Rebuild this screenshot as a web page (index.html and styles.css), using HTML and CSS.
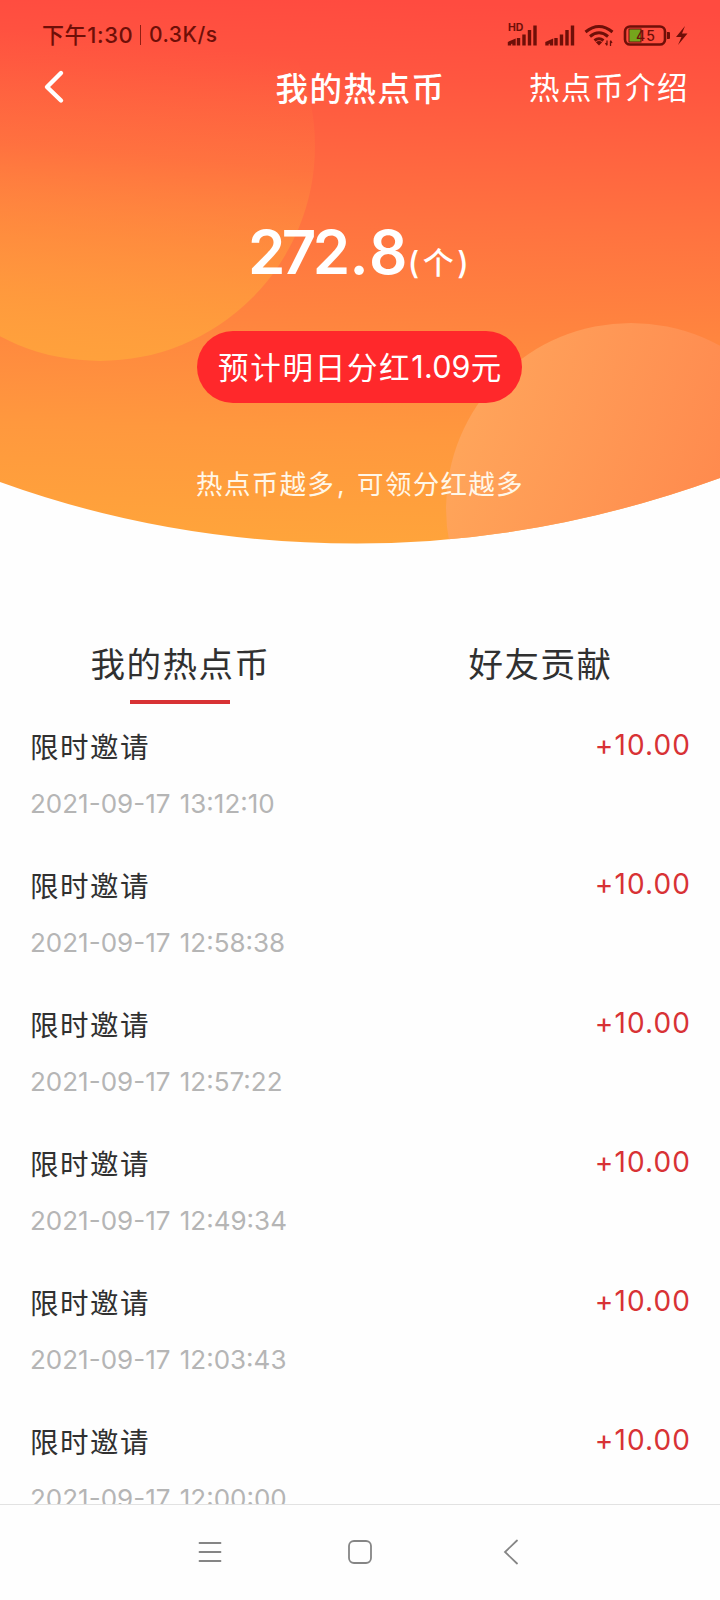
FILE: index.html
```html
<!DOCTYPE html>
<html lang="zh-CN">
<head>
<meta charset="utf-8">
<title>我的热点币</title>
<link rel="stylesheet" href="styles.css">
</head>
<body>
<main class="phone">
  <section class="hero">
    <svg class="hero-bg" width="720" height="546" viewBox="0 0 720 546" aria-hidden="true">
      <defs>
        <linearGradient id="base" gradientUnits="userSpaceOnUse" x1="370" y1="0" x2="350" y2="543">
          <stop offset="0" stop-color="#ff4b40"/><stop offset="0.14" stop-color="#ff5640"/><stop offset="0.4" stop-color="#ff7240"/><stop offset="0.6" stop-color="#ff853f"/><stop offset="0.8" stop-color="#ff983e"/><stop offset="1" stop-color="#ffa43b"/>
        </linearGradient>
        <linearGradient id="left" gradientUnits="userSpaceOnUse" x1="125" y1="40" x2="95" y2="361">
          <stop offset="0" stop-color="#ffa13c" stop-opacity="0"/><stop offset="0.35" stop-color="#ffa13c" stop-opacity="0.18"/><stop offset="0.7" stop-color="#ffa13c" stop-opacity="0.6"/><stop offset="1" stop-color="#ffa13c"/>
        </linearGradient>
        <linearGradient id="right" x1="0.1" y1="0.2" x2="0.75" y2="0.5">
          <stop offset="0" stop-color="#ffa65f"/><stop offset="1" stop-color="#ff8650"/>
        </linearGradient>
        <clipPath id="arc"><path d="M0 0H720V478Q540 543.5 357 543.5Q170 543.5 0 482Z"/></clipPath>
      </defs>
      <g clip-path="url(#arc)">
        <rect width="720" height="546" fill="url(#base)"/>
        <circle cx="100" cy="146" r="215" fill="url(#left)"/>
        <circle cx="631" cy="508" r="185" fill="url(#right)" opacity="0.85"/>
      </g>
    </svg>
    <div class="status">
      <span class="clock">下午1:30</span><span class="bar"></span><span class="speed">0.3K/s</span>
      <svg class="status-icons" width="184" height="30" viewBox="0 0 184 30">
        <text class="hd" x="0" y="11">HD</text>
        <g class="signal"><path d="M1.500 25.500V23L6 21V25.500M10.500 25.500V18M16 25.500V14.500M21.500 25.500V10M27 25.500V5.500"/><path d="M39 25.500V23L43.500 21V25.500M48 25.500V18M53.500 25.500V14.500M59 25.500V10M64.500 25.500V5.500"/></g>
        <g class="wifi"><path d="M77.500 12Q91 1 104.500 12M82 16.500Q91 9 100 16.500M86.500 20.500Q91 17 95.500 20.500"/></g>
        <path class="solid" d="M87.800 22.200Q91 20 94.200 22.200L91 25.500Z"/>
        <path class="tiny" d="M99 20.500V25M102.500 21V26M97.500 23L99 25.500M104 23L102.500 20.500"/>
        <rect x="121" y="9" width="12" height="13" fill="#75a51c"/>
        <rect class="battery" x="117" y="6.500" width="40" height="18" rx="5"/>
        <path class="solid" d="M159 12h2q1 0 1 1v5q0 1-1 1h-2z"/>
        <text class="level" x="138" y="20.500" text-anchor="middle">45</text>
        <path class="solid" d="M177 6L168 17H173.500L170 25L179.500 13.500H174Z"/>
      </svg>
    </div>
    <header class="navbar">
      <svg class="back" width="24" height="36" viewBox="0 0 24 36"><path d="M19 4L5 18L19 31.500"/></svg>
      <h1 class="title">我的热点币</h1>
      <a class="intro">热点币介绍</a>
    </header>
    <p class="balance"><strong class="amount">272<span class="dot">.</span>8</strong><span class="unit">(个)</span></p>
    <div class="pill">预计明日分红<span class="pill-num">1.09</span>元</div>
    <p class="tip">热点币越多<span class="comma">,</span>可领分红越多</p>
  </section>
  <nav class="tabs">
    <div class="tab active"><span>我的热点币</span></div>
    <div class="tab"><span>好友贡献</span></div>
  </nav>
  <ul class="list">
    <li class="item"><div class="row"><span>限时邀请</span><b class="gain">+10.00</b></div><time class="date">2021-09-17 13:12:10</time></li>
    <li class="item"><div class="row"><span>限时邀请</span><b class="gain">+10.00</b></div><time class="date">2021-09-17 12:58:38</time></li>
    <li class="item"><div class="row"><span>限时邀请</span><b class="gain">+10.00</b></div><time class="date">2021-09-17 12:57:22</time></li>
    <li class="item"><div class="row"><span>限时邀请</span><b class="gain">+10.00</b></div><time class="date">2021-09-17 12:49:34</time></li>
    <li class="item"><div class="row"><span>限时邀请</span><b class="gain">+10.00</b></div><time class="date">2021-09-17 12:03:43</time></li>
    <li class="item"><div class="row"><span>限时邀请</span><b class="gain">+10.00</b></div><time class="date">2021-09-17 12:00:00</time></li>
  </ul>
  <footer class="keys">
    <svg class="key" width="26" height="26" viewBox="0 0 26 26"><path d="M2.500 4H23.500M2.500 13H23.500M2.500 22H23.500"/></svg>
    <svg class="key" width="26" height="26" viewBox="0 0 26 26"><rect x="2" y="2" width="22" height="22" rx="5"/></svg>
    <svg class="key" width="26" height="26" viewBox="0 0 26 26"><path d="M20 1.500L8 13L20 24.500"/></svg>
  </footer>
</main>
</body>
</html>
```

FILE: styles.css
```css
* { box-sizing: border-box; margin: 0; padding: 0; }
body { background: #fff; font-family: Inter, "Noto Sans CJK SC", sans-serif; color: #303030; }
.phone { width: 720px; height: 1600px; display: flex; flex-direction: column; overflow: hidden; background: #fefefe; }

.hero { position: relative; z-index: 0; height: 546px; flex: none; color: #fff; display: flex; flex-direction: column; align-items: center; }
.hero-bg { position: absolute; left: 0; top: 0; z-index: -1; }

.status { width: 100%; height: 68px; padding: 1px 28px 0 42px; display: flex; align-items: center; color: #6f0f08; font-size: 22px; font-weight: 500; white-space: nowrap; }
.clock { width: 92px; margin-bottom: 4px; letter-spacing: 0.6px; }
.bar { width: 1px; height: 20px; margin: 0 8px 0 6px; background: #8f1d12; }
.speed { font-size: 21px; letter-spacing: 0.5px; }
.status-icons { margin-left: auto; overflow: visible; fill: none; stroke: #6f0f08; }
.status-icons text, .solid { fill: #6f0f08; stroke: none; }
.hd { font-size: 10.5px; font-weight: 700; }
.level { font-size: 14px; font-weight: 500; letter-spacing: 1px; }
.signal { stroke-width: 3.4; }
.wifi { stroke-width: 3; }
.tiny { stroke-width: 1.3; }
.battery { stroke-width: 2.6; }

.navbar { width: 100%; height: 44px; padding: 0 31px 0 42px; display: grid; grid-template-columns: 160px 1fr 160px; align-items: center; }
.back { margin-bottom: 6px; fill: none; stroke: #fff; stroke-width: 4.4; stroke-linecap: round; stroke-linejoin: round; }
.title { margin-right: 10px; font-size: 32.5px; font-weight: 500; letter-spacing: 1.5px; line-height: 44px; text-align: center; white-space: nowrap; }
.intro { font-size: 30.5px; letter-spacing: 1.5px; line-height: 40px; height: 44px; white-space: nowrap; }

.balance { height: 76px; margin-top: 102px; display: flex; align-items: baseline; line-height: 76px; }
.amount { font-size: 60px; font-weight: 600; letter-spacing: -3.6px; }
.dot { margin: 0 4px 0 3px; }
.unit { margin-left: 4px; font-size: 31px; font-weight: 500; letter-spacing: 3.5px; }
.pill { width: 325px; height: 72px; margin: 41px 1px 0 0; padding: 0 0 2px 2px; border-radius: 36px; background: #ff282b; display: flex; align-items: center; justify-content: center; font-size: 30.5px; letter-spacing: 1.7px; white-space: nowrap; }
.pill-num { letter-spacing: 0.2px; }
.tip { margin-top: 61px; height: 38px; line-height: 40px; font-size: 26.5px; letter-spacing: 1.3px; color: #fff7e8; white-space: nowrap; }
.comma { display: inline-block; width: 22px; padding-left: 2px; }

.tabs { height: 158px; flex: none; display: grid; grid-template-columns: 1fr 1fr; padding-top: 89px; }
.tab { display: flex; flex-direction: column; align-items: center; padding-left: 1px; font-size: 34.5px; letter-spacing: 1.5px; line-height: 60px; }
.tab::after { content: ""; width: 100px; height: 4px; margin: 5px 1px 0 0; }
.active::after { background: #d83235; }

.list { flex: 1; min-height: 0; overflow: hidden; list-style: none; padding: 19px 30px 0; }
.item { height: 139px; }
.row { height: 44px; display: flex; justify-content: space-between; align-items: center; font-size: 28.5px; letter-spacing: 1.5px; }
.gain { margin: 0 -1px 0 0; font-size: 28px; font-weight: 400; letter-spacing: 1.1px; color: #d83235; }
.date { display: block; margin-top: 21px; font-size: 26px; line-height: 32px; letter-spacing: 0; word-spacing: 2px; color: #b5b5b5; white-space: nowrap; }

.keys { height: 96px; flex: none; border-top: 1px solid #e2e2e2; padding: 0 1px 2px 0; display: flex; justify-content: center; gap: 124px; align-items: center; }
.key { fill: none; stroke: #858585; stroke-width: 1.8; stroke-linecap: round; }
```
